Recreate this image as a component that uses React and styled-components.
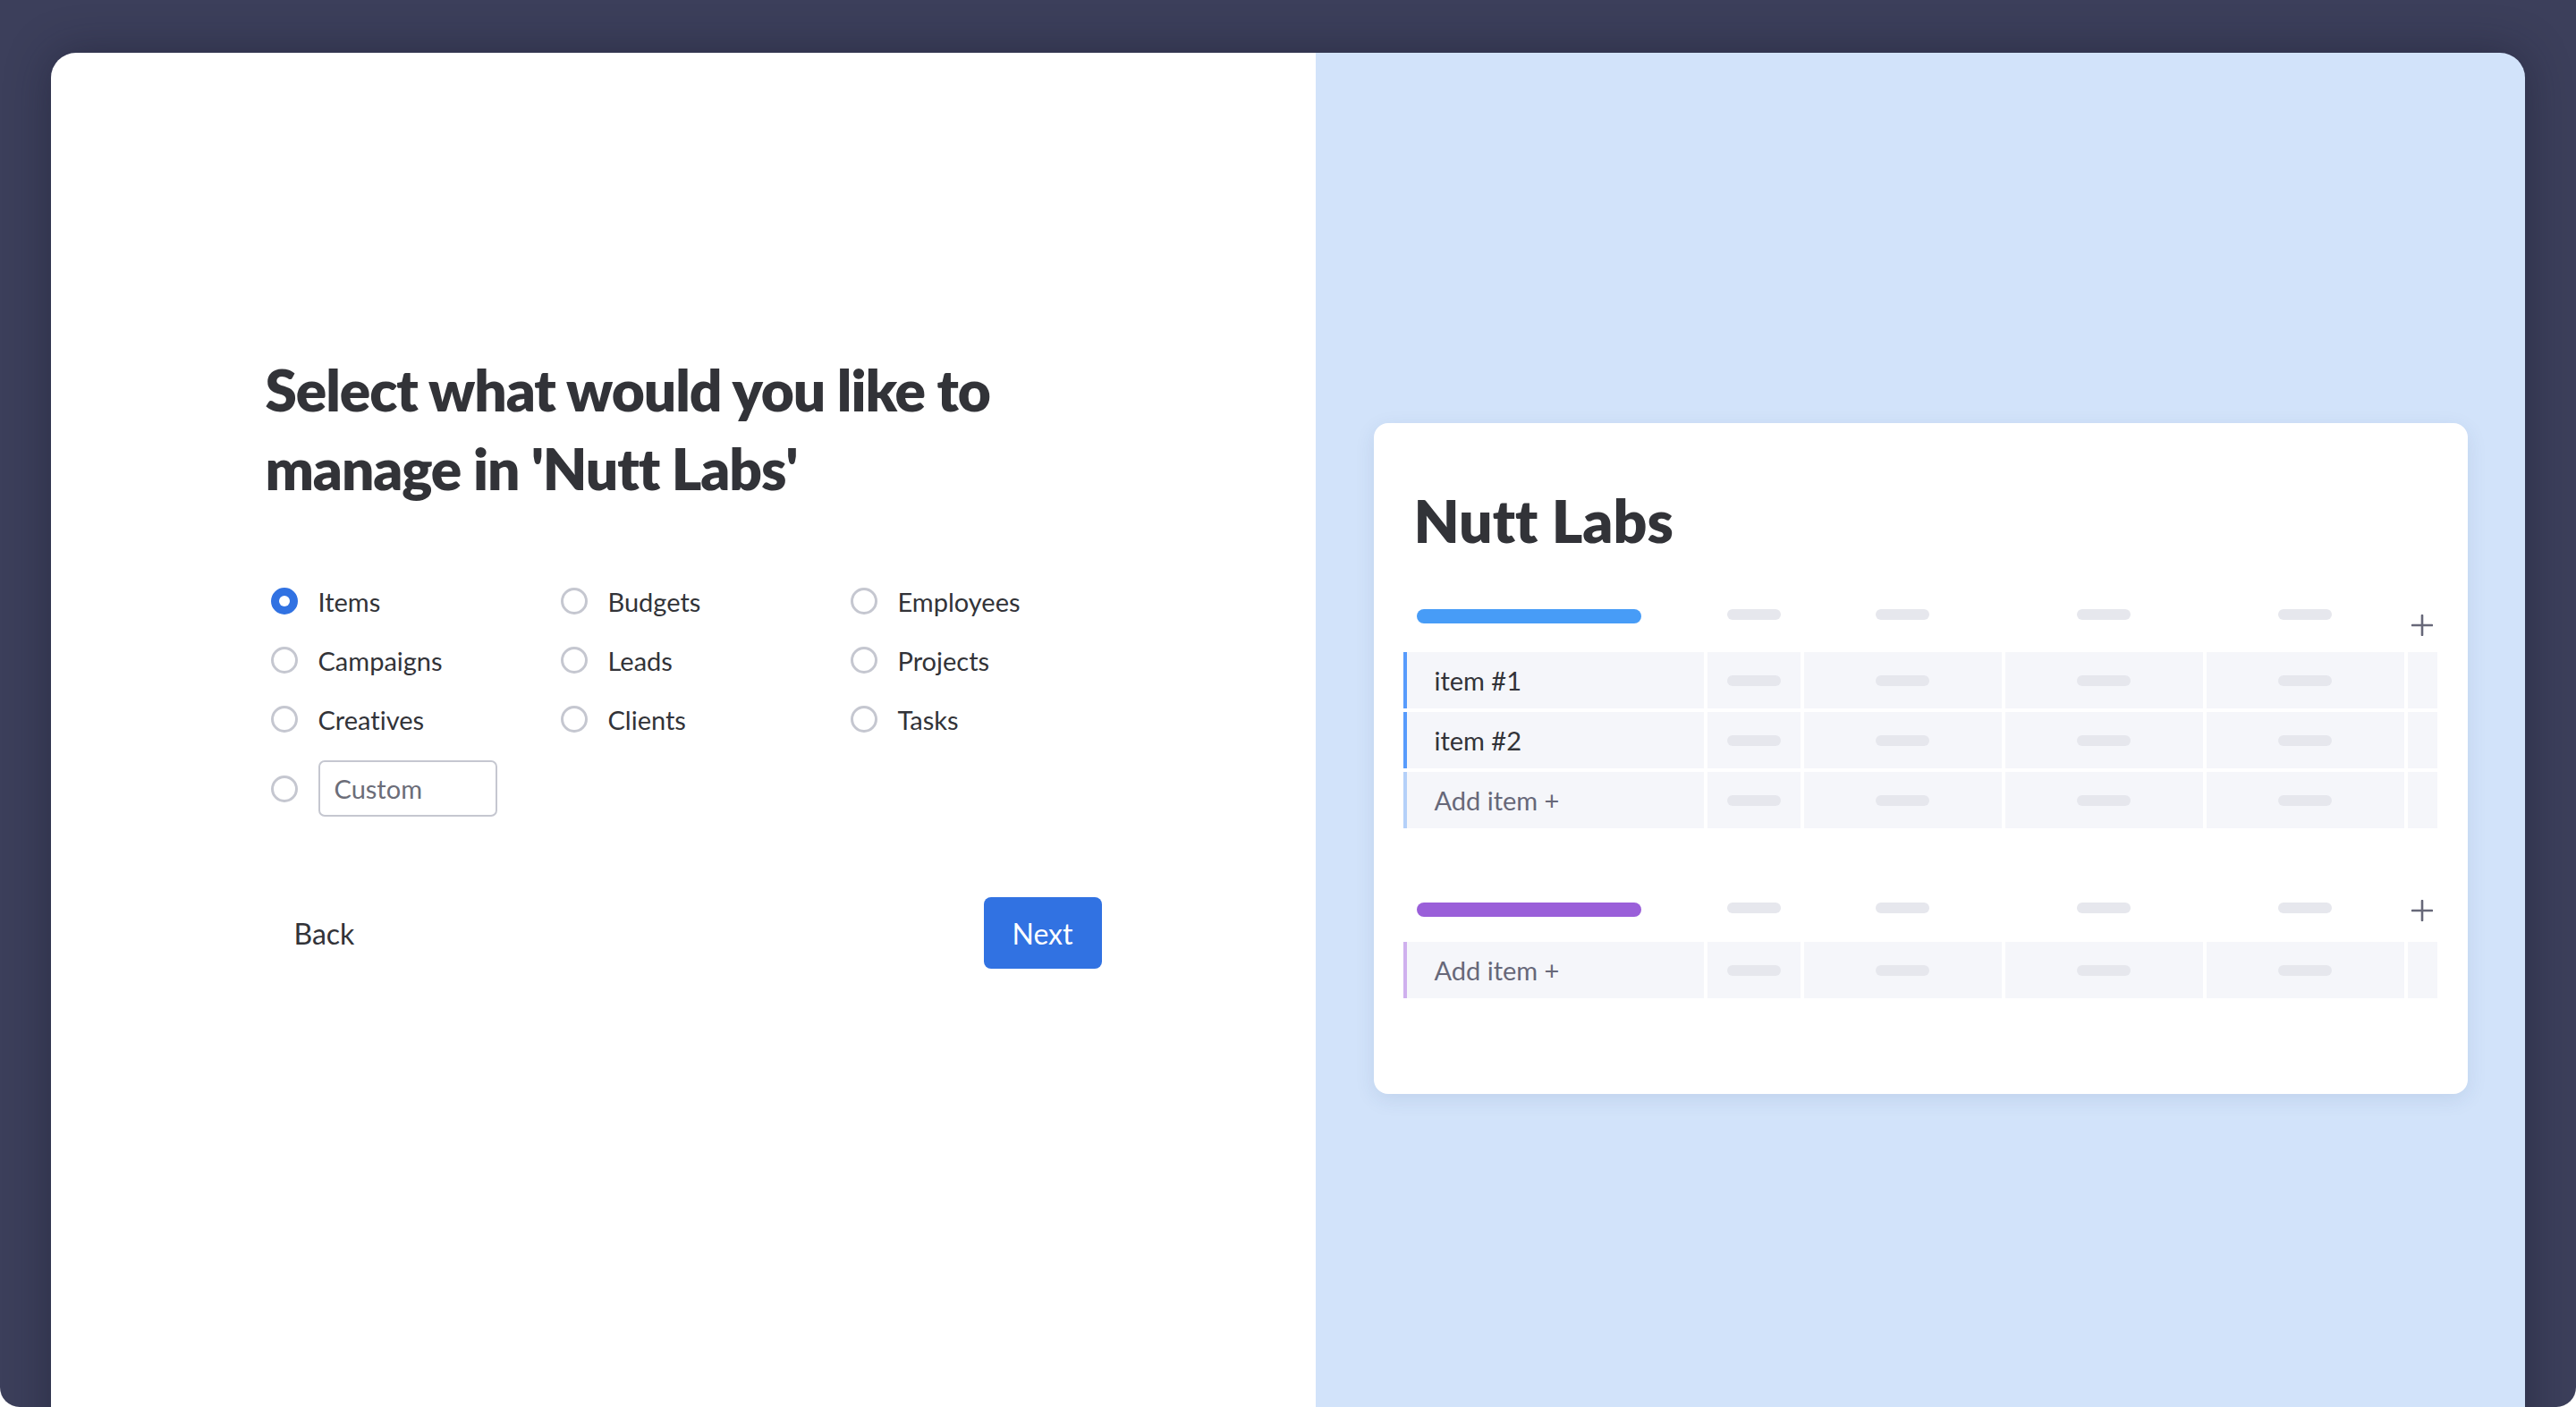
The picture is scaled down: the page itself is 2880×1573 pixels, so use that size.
import styled, { createGlobalStyle } from "styled-components";

const GlobalStyle = createGlobalStyle`
  html, body {
    margin: 0;
    padding: 0;
    background: #ffffff;
  }
  * {
    box-sizing: border-box;
  }
  body {
    font-family: Lato, "Noto Sans", sans-serif;
    font-variant-ligatures: none;
    color: #323338;
  }
  input, button {
    font-variant-ligatures: none;
  }
`;

const options = [
    "Items", "Budgets", "Employees",
    "Campaigns", "Leads", "Projects",
    "Creatives", "Clients", "Tasks",
];

const columns = "336px 104px 221px 221px 221px 33px";

const groups = [
    {
        pill: "#479cf7",
        headerHeight: 44,
        plusOffset: 6,
        rows: [
            { label: "item #1", border: "#579bfc" },
            { label: "item #2", border: "#579bfc" },
            { label: "Add item +", border: "#b4d0f9", muted: true },
        ],
    },
    {
        pill: "#9a5fd9",
        headerHeight: 40,
        plusOffset: -3,
        rows: [
            { label: "Add item +", border: "#cfb0ee", muted: true },
        ],
    },
];

function PlusIcon() {
    return (
        <svg width="24" height="24" viewBox="0 0 24 24">
            <line x1="12" y1="1" x2="12" y2="23" stroke="#676879" strokeWidth="2.6" strokeLinecap="round" />
            <line x1="1" y1="12" x2="23" y2="12" stroke="#676879" strokeWidth="2.6" strokeLinecap="round" />
        </svg>
    );
}

export default function App() {
    return (
        <>
            <GlobalStyle />
            <Screen>
                <Modal>
                    <LeftPanel>
                        <Content>
                            <Heading>Select what would you like to manage in 'Nutt Labs'</Heading>
                            <OptionsGrid>
                                {options.map((name, i) => (
                                    <Option key={name}>
                                        <Radio $checked={i === 0} />
                                        <Label>{name}</Label>
                                    </Option>
                                ))}
                            </OptionsGrid>
                            <CustomRow>
                                <Radio />
                                <CustomInput placeholder="Custom" />
                            </CustomRow>
                            <Actions>
                                <BackButton>Back</BackButton>
                                <NextButton>Next</NextButton>
                            </Actions>
                        </Content>
                    </LeftPanel>
                    <RightPanel>
                        <BoardCard>
                            <BoardTitle>Nutt Labs</BoardTitle>
                            {groups.map((group, gi) => (
                                <Group key={gi}>
                                    <GroupHeader $height={group.headerHeight}>
                                        <PillCell>
                                            <Pill $color={group.pill} />
                                        </PillCell>
                                        <PlaceholderCell><Placeholder /></PlaceholderCell>
                                        <PlaceholderCell><Placeholder /></PlaceholderCell>
                                        <PlaceholderCell><Placeholder /></PlaceholderCell>
                                        <PlaceholderCell><Placeholder /></PlaceholderCell>
                                        <AddColumn $offset={group.plusOffset}><PlusIcon /></AddColumn>
                                    </GroupHeader>
                                    {group.rows.map((row, ri) => (
                                        <Row key={ri}>
                                            <NameCell $border={row.border} $muted={row.muted}>{row.label}</NameCell>
                                            <Cell><Placeholder /></Cell>
                                            <Cell><Placeholder /></Cell>
                                            <Cell><Placeholder /></Cell>
                                            <Cell><Placeholder /></Cell>
                                            <Cell />
                                        </Row>
                                    ))}
                                </Group>
                            ))}
                        </BoardCard>
                    </RightPanel>
                </Modal>
            </Screen>
        </>
    );
}

const Screen = styled.div`
    width: 100vw;
    height: 1573px;
    background: #3c3f5b;
    border-radius: 0 0 22px 22px;
    overflow: hidden;
    padding: 59px 57px 0 57px;
`;

const Modal = styled.div`
    display: grid;
    grid-template-columns: 1414px 1fr;
    height: 1578px;
    border-radius: 28px;
    overflow: hidden;
    box-shadow: 0 0 50px rgba(22, 24, 42, 0.45);
`;

const LeftPanel = styled.section`
    background: #ffffff;
    display: flex;
    justify-content: center;
    padding-top: 333px;
`;

const Content = styled.div`
    width: 935px;
    display: flex;
    flex-direction: column;
`;

const Heading = styled.h1`
    margin: 0;
    max-width: 880px;
    font-family: Lato, "Noto Sans", sans-serif;
    font-weight: 800;
    font-size: 64px;
    line-height: 88px;
    letter-spacing: -1.1px;
    color: #323338;
`;

const OptionsGrid = styled.div`
    margin-top: 89px;
    padding-left: 6px;
    display: grid;
    grid-template-columns: 324px 324px auto;
    row-gap: 36px;
`;

const Option = styled.label`
    display: flex;
    align-items: center;
    gap: 23px;
    height: 30px;
`;

const Radio = styled.span`
    flex: none;
    position: relative;
    width: 30px;
    height: 30px;
    border-radius: 50%;
    border: 3px solid ${(p) => (p.$checked ? "#3172e2" : "#c5c7d0")};
    background: ${(p) => (p.$checked ? "#3172e2" : "#ffffff")};

    &::after {
        content: "";
        display: ${(p) => (p.$checked ? "block" : "none")};
        position: absolute;
        left: 50%;
        top: 50%;
        width: 12px;
        height: 12px;
        margin: -6px 0 0 -6px;
        border-radius: 50%;
        background: #ffffff;
    }
`;

const Label = styled.span`
    font-size: 29px;
    color: #323338;
    white-space: nowrap;
`;

const CustomRow = styled.div`
    margin-top: 31px;
    padding-left: 6px;
    display: flex;
    align-items: center;
    gap: 23px;
`;

const CustomInput = styled.input`
    width: 200px;
    height: 63px;
    border: 2px solid #c5c7d0;
    border-radius: 7px;
    padding: 0 16px;
    font-family: Lato, "Noto Sans", sans-serif;
    font-size: 29px;
    color: #323338;
    outline: none;

    &::placeholder {
        color: #6b6d78;
    }
`;

const Actions = styled.div`
    margin-top: 90px;
    display: flex;
    justify-content: space-between;
    align-items: center;
`;

const BackButton = styled.button`
    height: 80px;
    padding: 0 32px;
    border: none;
    background: none;
    font-family: Lato, "Noto Sans", sans-serif;
    font-size: 32px;
    color: #323338;
    cursor: pointer;
`;

const NextButton = styled.button`
    width: 132px;
    height: 80px;
    border: none;
    border-radius: 8px;
    background: #3172e2;
    font-family: Lato, "Noto Sans", sans-serif;
    font-size: 32px;
    color: #ffffff;
    cursor: pointer;
`;

const RightPanel = styled.section`
    background: #d2e3fa;
    display: flex;
    align-items: center;
    justify-content: center;
`;

const BoardCard = styled.div`
    width: 1223px;
    background: #ffffff;
    border-radius: 16px;
    padding: 76px 34px 107px 33px;
    box-shadow: 0 6px 22px rgba(40, 70, 120, 0.1);
    display: flex;
    flex-direction: column;
`;

const BoardTitle = styled.h2`
    margin: 0 0 66px 12px;
    font-family: Lato, "Noto Sans", sans-serif;
    font-weight: 800;
    font-size: 66px;
    line-height: 66px;
    color: #323338;
`;

const Group = styled.div`
    display: flex;
    flex-direction: column;
    gap: 4px;

    & + & {
        margin-top: 83px;
    }
`;

const GroupHeader = styled.div`
    display: grid;
    grid-template-columns: ${columns};
    column-gap: 4px;
    height: ${(p) => p.$height}px;
    align-items: start;
`;

const PillCell = styled.div`
    padding-left: 15px;
`;

const Pill = styled.div`
    width: 251px;
    height: 16px;
    border-radius: 8px;
    background: ${(p) => p.$color};
`;

const PlaceholderCell = styled.div`
    display: flex;
    justify-content: center;
`;

const AddColumn = styled.div`
    display: flex;
    justify-content: center;
    margin-top: ${(p) => p.$offset}px;
`;

const Placeholder = styled.div`
    width: 60px;
    height: 12px;
    border-radius: 6px;
    background: #e6e7ed;
`;

const Row = styled.div`
    display: grid;
    grid-template-columns: ${columns};
    column-gap: 4px;
    height: 63px;
`;

const Cell = styled.div`
    background: #f5f6fa;
    display: flex;
    align-items: center;
    justify-content: center;
`;

const NameCell = styled.div`
    background: #f5f6fa;
    border-left: 4px solid ${(p) => p.$border};
    display: flex;
    align-items: center;
    padding-left: 31px;
    font-size: 29px;
    color: ${(p) => (p.$muted ? "#676879" : "#323338")};
`;
